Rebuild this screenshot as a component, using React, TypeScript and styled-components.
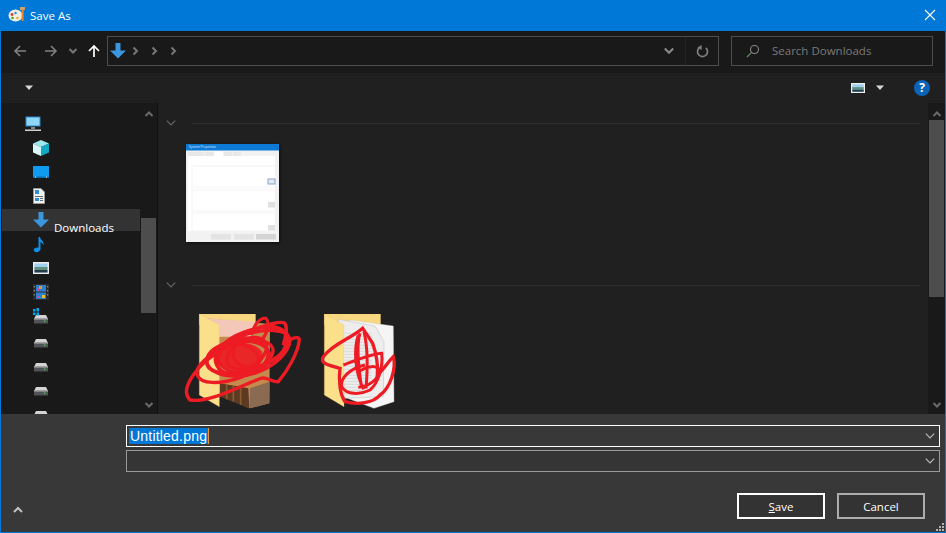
import React from "react";
import styled, { createGlobalStyle } from "styled-components";

const GlobalStyle = createGlobalStyle`
    html, body {
        margin: 0;
        padding: 0;
        background: #383838;
    }
    * {
        box-sizing: border-box;
    }
`;

const Dialog = styled.div`
    width: 946px;
    height: 533px;
    display: flex;
    flex-direction: column;
    overflow: hidden;
    border: 1px solid #0078d7;
    font-family: "Open Sans", "Noto Sans", sans-serif;
    font-size: 12px;
    color: #fff;
`;

const TitleBar = styled.div`
    height: 30px;
    flex: none;
    display: flex;
    align-items: center;
    padding: 0 9px 2px 7px;
    gap: 4px;
    background: #0078d7;
`;

const Title = styled.span`
    flex: 1;
    font-size: 11.5px;
`;

const NavBar = styled.div`
    height: 42px;
    flex: none;
    display: flex;
    align-items: center;
    padding: 0 12px 2px 12px;
    background: #191919;
`;

const NavIcon = styled.svg<{ $gap?: number }>`
    flex: none;
    margin-right: ${(p) => p.$gap ?? 0}px;
`;

const FieldBox = styled.div<{ $width: number }>`
    width: ${(p) => p.$width}px;
    height: 30px;
    flex: none;
    display: flex;
    align-items: center;
    border: 1px solid #4d4d4d;
`;

const SearchBox = styled(FieldBox)`
    padding-left: 14px;
`;

const Crumbs = styled.div`
    flex: 1;
    display: flex;
    align-items: center;
    padding-left: 2px;
`;

const FieldAction = styled.div`
    width: 33px;
    height: 100%;
    display: flex;
    align-items: center;
    justify-content: center;
    border-left: 1px solid #222;
`;

const SearchText = styled.span`
    margin-left: 12px;
    padding-bottom: 2px;
    color: #7a7a7a;
    font-size: 11.5px;
`;

const ToolBar = styled.div`
    height: 30px;
    flex: none;
    display: flex;
    align-items: center;
    padding-left: 23px;
    background: #202020;
`;

const Spacer = styled.div`
    flex: 1;
`;

const Help = styled.div`
    width: 16px;
    height: 16px;
    margin-right: 15px;
    margin-left: 29px;
    border-radius: 50%;
    background: #0a64b8;
    color: #fff;
    font-size: 12px;
    font-weight: 700;
    line-height: 16px;
    text-align: center;
`;

const Body = styled.div`
    flex: 1;
    min-height: 0;
    display: flex;
    background: #191919;
`;

const Sidebar = styled.div`
    width: 157px;
    flex: none;
    display: flex;
    overflow: hidden;
    border-right: 1px solid #111;
`;

const NavList = styled.div`
    width: 139px;
    flex: none;
    display: flex;
    flex-direction: column;
    gap: 2px;
    padding: 10px 0 0 1px;
`;

const NavRow = styled.div<{ $active?: boolean; $root?: boolean }>`
    height: 22px;
    flex: none;
    display: flex;
    align-items: center;
    padding-left: ${(p) => (p.$root ? 23 : 31)}px;
    background: ${(p) => (p.$active ? "#333" : "transparent")};
`;

const NavLabel = styled.span`
    margin-left: 5px;
    padding-top: 14px;
    white-space: nowrap;
    font-size: 11.5px;
`;

const ScrollTrack = styled.div<{ $width: number; $thumbTop: number; $thumbHeight: number }>`
    width: ${(p) => p.$width}px;
    flex: none;
    display: flex;
    flex-direction: column;
    align-items: center;
    padding-top: 6px;
    background: #191919;

    & > i {
        display: block;
        width: 15px;
        height: ${(p) => p.$thumbHeight}px;
        margin-top: ${(p) => p.$thumbTop}px;
        background: #4d4d4d;
    }
`;

const ScrollDown = styled.svg`
    margin-top: auto;
    margin-bottom: 4px;
`;

const Main = styled.div`
    flex: 1;
    display: flex;
    flex-direction: column;
    overflow: hidden;
    padding: 15px 0 0 7px;
    background: #202020;
`;

const GroupHead = styled.div<{ $top?: number }>`
    height: 10px;
    flex: none;
    display: flex;
    align-items: center;
    gap: 15px;
    margin-top: ${(p) => p.$top ?? 0}px;
    padding-right: 8px;

    &::after {
        content: "";
        flex: 1;
        height: 1px;
        background: #2d2d2d;
    }
`;

const Tiles = styled.div<{ $top: number; $left: number; $height: number }>`
    height: ${(p) => p.$height}px;
    flex: none;
    display: flex;
    margin-top: ${(p) => p.$top}px;
    margin-left: ${(p) => p.$left}px;
`;

const ThumbFrame = styled.svg`
    box-shadow: 1px 1px 3px rgba(0, 0, 0, 0.6);
`;

const FolderArt = styled.svg`
    flex: none;
    overflow: visible;
`;

const Footer = styled.div`
    height: 118px;
    flex: none;
    display: flex;
    flex-direction: column;
    padding: 11px 5px 0 125px;
    background: #383838;
    position: relative;
`;

const Combo = styled.div<{ $focused?: boolean }>`
    height: 22px;
    flex: none;
    display: flex;
    align-items: center;
    justify-content: space-between;
    padding: 0 3px 0 2px;
    margin-bottom: 3px;
    border: 1px solid ${(p) => (p.$focused ? "#fff" : "#999")};
    background: ${(p) => (p.$focused ? "#383838" : "#353535")};
`;

const Selected = styled.span`
    height: 16px;
    padding: 0 1px;
    background: #0078d7;
    border-right: 1px solid #e8963c;
    color: #fff;
    font-family: "Liberation Sans", sans-serif;
    font-size: 14px;
    letter-spacing: 0.2px;
    line-height: 16px;
`;

const Buttons = styled.div`
    display: flex;
    justify-content: flex-end;
    gap: 12px;
    margin-top: 18px;
    padding-right: 15px;
`;

const Button = styled.button<{ $primary?: boolean }>`
    width: 88px;
    height: 26px;
    padding: 0;
    border: 2px solid ${(p) => (p.$primary ? "#fff" : "#adadad")};
    background: #333;
    color: #fff;
    font-family: inherit;
    font-size: 11.5px;

    & u {
        text-underline-offset: 1px;
    }
`;

const Collapse = styled.svg`
    position: absolute;
    left: 12px;
    bottom: 17px;
`;

const Grip = styled.svg`
    position: absolute;
    right: 1px;
    bottom: 1px;
`;

const Chevron = ({ dir = "right", color = "#777", size = 10, width = 1.6, gap }: { dir?: string; color?: string; size?: number; width?: number; gap?: number }) => {
    const pts: Record<string, string> = {
        right: "3.5,1.5 7,5 3.5,8.5",
        down: "1.5,3 5,6.5 8.5,3",
        up: "1.5,7 5,3.5 8.5,7",
    };
    return (
        <NavIcon $gap={gap} width={size} height={size} viewBox="0 0 10 10">
            <polyline points={pts[dir]} fill="none" stroke={color} strokeWidth={width} />
        </NavIcon>
    );
};

const Caret = ({ gap }: { gap?: number }) => (
    <NavIcon $gap={gap} width="10" height="6" viewBox="0 0 10 6">
        <polygon points="1,0.5 9,0.5 5,5" fill="#d8d8d8" />
    </NavIcon>
);

const DownloadIcon = ({ gap }: { gap?: number }) => (
    <NavIcon $gap={gap} width="16" height="16" viewBox="0 0 16 16">
        <polygon points="5.5,0 10.5,0 10.5,7.5 16,7.5 8,15.5 0,7.5 5.5,7.5" fill="#3a96dd" />
    </NavIcon>
);

const PaletteIcon = () => (
    <svg width="18" height="18" viewBox="0 0 18 18">
        <ellipse cx="7.5" cy="9.5" rx="7" ry="6" fill="#f0ede4" />
        <circle cx="4" cy="8.5" r="1.4" fill="#d83b2b" />
        <circle cx="7.5" cy="7" r="1.3" fill="#3a96dd" />
        <circle cx="4.5" cy="12" r="1.3" fill="#5aa02c" />
        <circle cx="9.5" cy="12" r="1.3" fill="#f0b429" />
        <rect x="13.6" y="3" width="2" height="12" fill="#e8862e" />
        <rect x="12" y="1" width="5" height="3" fill="#c9a36a" />
    </svg>
);

const DriveIcon = () => (
    <svg width="16" height="16" viewBox="0 0 16 16">
        <polygon points="3,7 13,7 15,11 1,11" fill="#d4d4d4" />
        <rect x="1" y="10.5" width="14" height="5" rx="0.6" fill="#50545a" />
        <rect x="1" y="10.5" width="14" height="1" fill="#b4b4b4" />
        <rect x="11" y="12.5" width="1.4" height="1.4" fill="#3fd13f" />
    </svg>
);

const PictureIcon = ({ gap, width = 16, height = 12 }: { gap?: number; width?: number; height?: number }) => (
    <NavIcon $gap={gap} width={width} height={height} viewBox="0 0 16 12" preserveAspectRatio="none">
        <rect width="16" height="12" fill="#eeeeee" />
        <rect x="1.5" y="1.5" width="13" height="9" fill="#9fd0ee" />
        <rect x="1.5" y="5" width="13" height="3" fill="#5f9080" />
        <rect x="1.5" y="8" width="13" height="2.5" fill="#243c4a" />
    </NavIcon>
);

const sideIcons: React.ReactNode[] = [
    <svg width="16" height="16" viewBox="0 0 16 16" key="pc">
        <rect x="0.5" y="0.5" width="15" height="10" fill="#2d86c6" />
        <rect x="1.5" y="1.5" width="13" height="8" fill="#8fd6fb" />
        <rect x="6" y="11" width="4" height="2" fill="#8a8a8a" />
        <rect x="0" y="13.5" width="16" height="1.5" fill="#d0d0d0" />
    </svg>,
    <svg width="16" height="16" viewBox="0 0 16 16" key="cube">
        <polygon points="8,0 16,3.5 8,7 0,3.5" fill="#9be8ee" />
        <polygon points="0,3.5 8,7 8,16 0,12.5" fill="#d8f7f8" />
        <polygon points="16,3.5 8,7 8,16 16,12.5" fill="#12a9c4" />
    </svg>,
    <svg width="16" height="12" viewBox="0 0 16 12" key="desk">
        <rect width="16" height="12" rx="0.5" fill="#0f9bf0" />
        <rect x="0" y="10.5" width="16" height="1.5" fill="#0a6cb0" />
        <rect x="2" y="10.5" width="1" height="1" fill="#fff" />
        <rect x="13" y="10.5" width="1" height="1" fill="#fff" />
    </svg>,
    <svg width="12" height="16" viewBox="0 0 12 16" key="docs">
        <polygon points="0.5,0.5 8,0.5 11.5,4 11.5,15.5 0.5,15.5" fill="#f2f2f2" stroke="#999" />
        <rect x="2" y="2" width="4" height="4" fill="#2e8fd6" />
        <rect x="2" y="8" width="8" height="1" fill="#5d6b75" />
        <rect x="2" y="10" width="4" height="3" fill="#2e8fd6" />
        <rect x="7" y="10" width="3" height="1" fill="#5d6b75" />
        <rect x="7" y="12" width="3" height="1" fill="#5d6b75" />
    </svg>,
    <DownloadIcon key="dl" />,
    <svg width="12" height="17" viewBox="0 0 12 17" key="music">
        <path d="M5.5 1 L7 1 C7.3 4 11.5 5 10.5 9.5 C10 7.5 8.8 6.5 7.5 6.3 L7.5 13 C7.5 15 5.5 16.2 3.5 16.2 C1.5 16.2 0.5 15 0.8 13.6 C1.2 12 3.5 11 5.5 11.6 Z" fill="#0f8fe8" />
    </svg>,
    <PictureIcon key="pics" />,
    <svg width="16" height="16" viewBox="0 0 16 16" key="film">
        <rect width="16" height="16" fill="#2b2b2b" />
        <rect x="3" y="1" width="10" height="6.5" fill="#2f7fd0" />
        <rect x="3" y="8.5" width="10" height="6.5" fill="#2f7fd0" />
        <rect x="6" y="2" width="3" height="3" fill="#d89a2b" />
        <rect x="4" y="4" width="2" height="3" fill="#c04fa0" />
        <rect x="9" y="11" width="3" height="3" fill="#e5c02a" />
        <rect x="4" y="12" width="3" height="2" fill="#c04fa0" />
        <g fill="#8a8a8a">
            <rect x="0.7" y="2" width="1.2" height="1.5" />
            <rect x="0.7" y="6" width="1.2" height="1.5" />
            <rect x="0.7" y="10" width="1.2" height="1.5" />
            <rect x="14.1" y="2" width="1.2" height="1.5" />
            <rect x="14.1" y="6" width="1.2" height="1.5" />
            <rect x="14.1" y="10" width="1.2" height="1.5" />
        </g>
    </svg>,
    <svg width="16" height="18" viewBox="0 0 16 18" key="os">
        <polygon points="3,8 13,8 15,12 1,12" fill="#d4d4d4" />
        <rect x="1" y="11.5" width="14" height="5" rx="0.6" fill="#50545a" />
        <rect x="1" y="11.5" width="14" height="1" fill="#b4b4b4" />
        <rect x="11" y="13.5" width="1.4" height="1.4" fill="#3fd13f" />
        <g fill="#00a8f0">
            <rect x="0" y="2" width="2.5" height="2.5" />
            <rect x="3.5" y="1" width="2.5" height="3.5" />
            <rect x="0" y="5.5" width="2.5" height="2.5" />
            <rect x="3.5" y="5.5" width="2.5" height="3" />
        </g>
    </svg>,
    <DriveIcon key="d1" />,
    <DriveIcon key="d2" />,
    <DriveIcon key="d3" />,
    <DriveIcon key="d4" />,
];

const Thumbnail = () => (
    <ThumbFrame width="93" height="98" viewBox="0 0 93 98">
        <defs>
            <filter id="soft">
                <feGaussianBlur stdDeviation="0.4" />
            </filter>
        </defs>
        <rect width="93" height="98" fill="#f2f2f2" />
        <g filter="url(#soft)">
            <rect width="93" height="6.5" fill="#0a7ad6" />
            <rect x="2" y="8" width="16" height="4" fill="#e8e8e8" />
            <rect x="19" y="8" width="9" height="4" fill="#e8e8e8" />
            <rect x="28" y="7.5" width="9" height="5" fill="#fff" />
            <rect x="38" y="8" width="8" height="4" fill="#e8e8e8" />
            <rect x="47" y="8" width="8" height="4" fill="#e8e8e8" />
            <rect x="2" y="12" width="87" height="75" fill="#fff" />
            <rect x="6" y="22" width="83" height="21" fill="#fff" stroke="#f4f4f4" />
            <rect x="6" y="46" width="83" height="21" fill="#fff" stroke="#f4f4f4" />
            <rect x="6" y="69" width="83" height="18" fill="#fff" stroke="#f4f4f4" />
            <rect x="82" y="35" width="7" height="5" fill="#e8e8e8" stroke="#7fa8d4" />
            <rect x="82" y="58" width="7" height="5.5" fill="#e0e0e0" />
            <rect x="82" y="81" width="7" height="5.5" fill="#e0e0e0" />
            <rect x="25" y="90" width="20" height="5.5" fill="#e4e4e4" />
            <rect x="48" y="90" width="20" height="5.5" fill="#e4e4e4" />
            <rect x="70" y="90" width="20" height="5.5" fill="#d4d4d4" />
        </g>
        <text x="3" y="4.4" fontSize="3.2" fill="#d8ecff" fontFamily="Open Sans, sans-serif">
            System Properties
        </text>
    </ThumbFrame>
);

const strokeLoop = (items: [number, number, number, number, number][]) =>
    items.map(([cx, cy, rx, ry, rot], i) => (
        <ellipse key={i} cx={cx} cy={cy} rx={rx} ry={ry} transform={`rotate(${rot} ${cx} ${cy})`} fill="none" stroke="#ed1c24" strokeWidth="10" />
    ));

const PhotoFolder = () => (
    <FolderArt width="120" height="115" viewBox="0 0 360 345">
        <polygon points="88,42 257,42 257,75 88,75" fill="#f7d77f" />
        <polygon points="105,55 300,72 298,310 238,325 148,285" fill="#c48a4e" />
        <polygon points="105,55 255,65 240,110 130,110" fill="#f4c8b8" />
        <polygon points="150,250 235,265 238,325 150,290" fill="#5d3a22" />
        <g stroke="#8a5a30" strokeWidth="5">
            <line x1="170" y1="255" x2="170" y2="298" />
            <line x1="190" y1="258" x2="190" y2="305" />
            <line x1="212" y1="262" x2="212" y2="315" />
        </g>
        <polygon points="240,265 298,245 298,310 238,325" fill="#8a6a50" />
        <polygon points="88,42 148,75 148,320 88,285" fill="#fbe08c" stroke="#e6c36a" strokeWidth="1" />
        <path d="M60 300 C45 285 45 260 70 225 C90 195 120 170 150 155 C160 115 220 95 260 85 C300 72 335 62 345 70 C355 90 345 110 340 135 C350 120 385 105 388 118 C385 160 350 215 325 245 C305 248 290 225 265 238 C205 260 115 310 60 300 Z" fill="none" stroke="#ed1c24" strokeWidth="10" />
        <path d="M245 105 C250 75 270 52 288 55 C302 70 292 100 272 125" fill="none" stroke="#ed1c24" strokeWidth="9" />
        {strokeLoop([
            [235, 155, 130, 52, -18],
            [250, 155, 115, 62, -24],
            [205, 175, 95, 52, -6],
            [270, 140, 85, 55, -25],
            [195, 185, 120, 50, -20],
            [215, 170, 80, 55, -12],
            [205, 175, 60, 42, 4],
            [230, 160, 65, 40, -30],
        ])}
        <ellipse cx="212" cy="170" rx="68" ry="42" fill="#ed1c24" opacity="0.9" />
    </FolderArt>
);

const PaperFolder = () => (
    <FolderArt width="120" height="115" viewBox="0 0 360 345">
        <polygon points="103,42 272,42 272,75 103,75" fill="#f7d77f" />
        <polygon points="180,60 310,78 312,305 252,325 160,290" fill="#f5f5f5" stroke="#cfcfcf" strokeWidth="1" />
        <polygon points="145,58 255,78 282,125 280,290 165,295" fill="#ededed" stroke="#bdbdbd" strokeWidth="1.5" />
        <g stroke="#cdcdcd" strokeWidth="2">
            {Array.from({ length: 20 }).map((_, i) => (
                <line key={i} x1="165" y1={100 + i * 9} x2="245" y2={100 + i * 9} />
            ))}
        </g>
        <polygon points="103,42 162,75 162,320 103,285" fill="#fbe08c" stroke="#e6c36a" strokeWidth="1" />
        <path d="M218 85 C180 118 130 130 100 170 C88 188 110 195 150 205 C145 240 150 285 165 305 C200 315 250 310 270 285 C300 265 320 205 310 170 C290 190 280 210 262 225 C265 190 255 150 248 130 C235 110 225 95 218 85 Z" fill="none" stroke="#ed1c24" strokeWidth="10" />
        <path d="M210 100 C200 130 205 200 215 265 M222 95 C235 150 232 220 228 265 M205 105 C190 150 195 220 222 268 M160 195 C200 180 250 160 275 160 C280 200 265 250 240 270 C210 285 170 285 155 260 C150 235 180 205 225 195 M205 215 C230 200 262 190 270 215 C262 240 235 260 205 262" fill="none" stroke="#ed1c24" strokeWidth="9" />
    </FolderArt>
);

const App = () => {
    return (
        <>
            <GlobalStyle />
            <Dialog>
                <TitleBar>
                    <PaletteIcon />
                    <Title>Save As</Title>
                    <svg width="12" height="12" viewBox="0 0 12 12">
                        <path d="M1 1 L11 11 M11 1 L1 11" stroke="#fff" strokeWidth="1.1" />
                    </svg>
                </TitleBar>
                <NavBar>
                    <NavIcon $gap={17} width="14" height="14" viewBox="0 0 14 14">
                        <path d="M13 7 H2 M7 2 L2 7 L7 12" fill="none" stroke="#808080" strokeWidth="1.6" />
                    </NavIcon>
                    <NavIcon $gap={10} width="14" height="14" viewBox="0 0 14 14">
                        <path d="M1 7 H12 M7 2 L12 7 L7 12" fill="none" stroke="#808080" strokeWidth="1.6" />
                    </NavIcon>
                    <Chevron dir="down" size={10} width={2} gap={9} />
                    <NavIcon $gap={6} width="14" height="14" viewBox="0 0 14 14">
                        <path d="M7 13 V2 M2 7 L7 2 L12 7" fill="none" stroke="#fff" strokeWidth="1.7" />
                    </NavIcon>
                    <FieldBox $width={612}>
                        <Crumbs>
                            <DownloadIcon gap={4} />
                            <Chevron gap={9} width={2} />
                            <Chevron gap={9} width={2} />
                            <Chevron width={2} />
                        </Crumbs>
                        <Chevron dir="down" size={12} width={1.8} color="#888" gap={10} />
                        <FieldAction>
                            <svg width="13" height="13" viewBox="0 0 13 13">
                                <path d="M9.8 2.8 A5 5 0 1 1 3.2 2.8" fill="none" stroke="#808080" strokeWidth="1.7" />
                                <polygon points="5.6,0 5.6,5 1.5,2.5" fill="#808080" />
                            </svg>
                        </FieldAction>
                    </FieldBox>
                    <Spacer />
                    <SearchBox $width={202}>
                        <svg width="14" height="14" viewBox="0 0 14 14">
                            <circle cx="8.5" cy="5.5" r="4" fill="none" stroke="#8a8a8a" strokeWidth="1.1" />
                            <path d="M5.6 8.4 L1 13" stroke="#6d8a6d" strokeWidth="1.2" />
                        </svg>
                        <SearchText>Search Downloads</SearchText>
                    </SearchBox>
                </NavBar>
                <ToolBar>
                    <Caret />
                    <Spacer />
                    <PictureIcon gap={10} width={14} height={10} />
                    <Caret />
                    <Help>?</Help>
                </ToolBar>
                <Body>
                    <Sidebar>
                        <NavList>
                            {sideIcons.map((icon, i) => (
                                <NavRow key={i} $root={i === 0} $active={i === 4}>
                                    {icon}
                                    {i === 4 && <NavLabel>Downloads</NavLabel>}
                                </NavRow>
                            ))}
                        </NavList>
                        <ScrollTrack $width={17} $thumbTop={99} $thumbHeight={95}>
                            <Chevron dir="up" size={10} width={2} color="#6a6a6a" />
                            <i />
                            <ScrollDown width="10" height="10" viewBox="0 0 10 10">
                                <polyline points="1.5,3 5,6.5 8.5,3" fill="none" stroke="#6a6a6a" strokeWidth="2" />
                            </ScrollDown>
                        </ScrollTrack>
                    </Sidebar>
                    <Main>
                        <GroupHead>
                            <Chevron dir="down" size={12} width={1} color="#666" />
                        </GroupHead>
                        <Tiles $top={16} $left={21} $height={98}>
                            <Thumbnail />
                        </Tiles>
                        <GroupHead $top={38}>
                            <Chevron dir="down" size={12} width={1} color="#666" />
                        </GroupHead>
                        <Tiles $top={10} $left={5} $height={115}>
                            <PhotoFolder />
                            <PaperFolder />
                        </Tiles>
                    </Main>
                    <ScrollTrack $width={17} $thumbTop={1} $thumbHeight={177}>
                        <Chevron dir="up" size={10} width={2} color="#6a6a6a" />
                        <i />
                        <ScrollDown width="10" height="10" viewBox="0 0 10 10">
                            <polyline points="1.5,3 5,6.5 8.5,3" fill="none" stroke="#6a6a6a" strokeWidth="2" />
                        </ScrollDown>
                    </ScrollTrack>
                </Body>
                <Footer>
                    <Combo $focused>
                        <Selected>Untitled.png</Selected>
                        <Chevron dir="down" size={12} width={1} color="#bbb" />
                    </Combo>
                    <Combo>
                        <span />
                        <Chevron dir="down" size={12} width={1} color="#bbb" />
                    </Combo>
                    <Buttons>
                        <Button $primary>
                            <u>S</u>ave
                        </Button>
                        <Button>Cancel</Button>
                    </Buttons>
                    <Collapse width="10" height="10" viewBox="0 0 10 10">
                        <polyline points="1,7 5,3 9,7" fill="none" stroke="#c4c4c4" strokeWidth="2" />
                    </Collapse>
                    <Grip width="8" height="8" viewBox="0 0 8 8" fill="#b0b0b0">
                        <rect x="6" y="0" width="2" height="2" />
                        <rect x="3" y="3" width="2" height="2" />
                        <rect x="6" y="3" width="2" height="2" />
                        <rect x="0" y="6" width="2" height="2" />
                        <rect x="3" y="6" width="2" height="2" />
                        <rect x="6" y="6" width="2" height="2" />
                    </Grip>
                </Footer>
            </Dialog>
        </>
    );
};

export default App;
